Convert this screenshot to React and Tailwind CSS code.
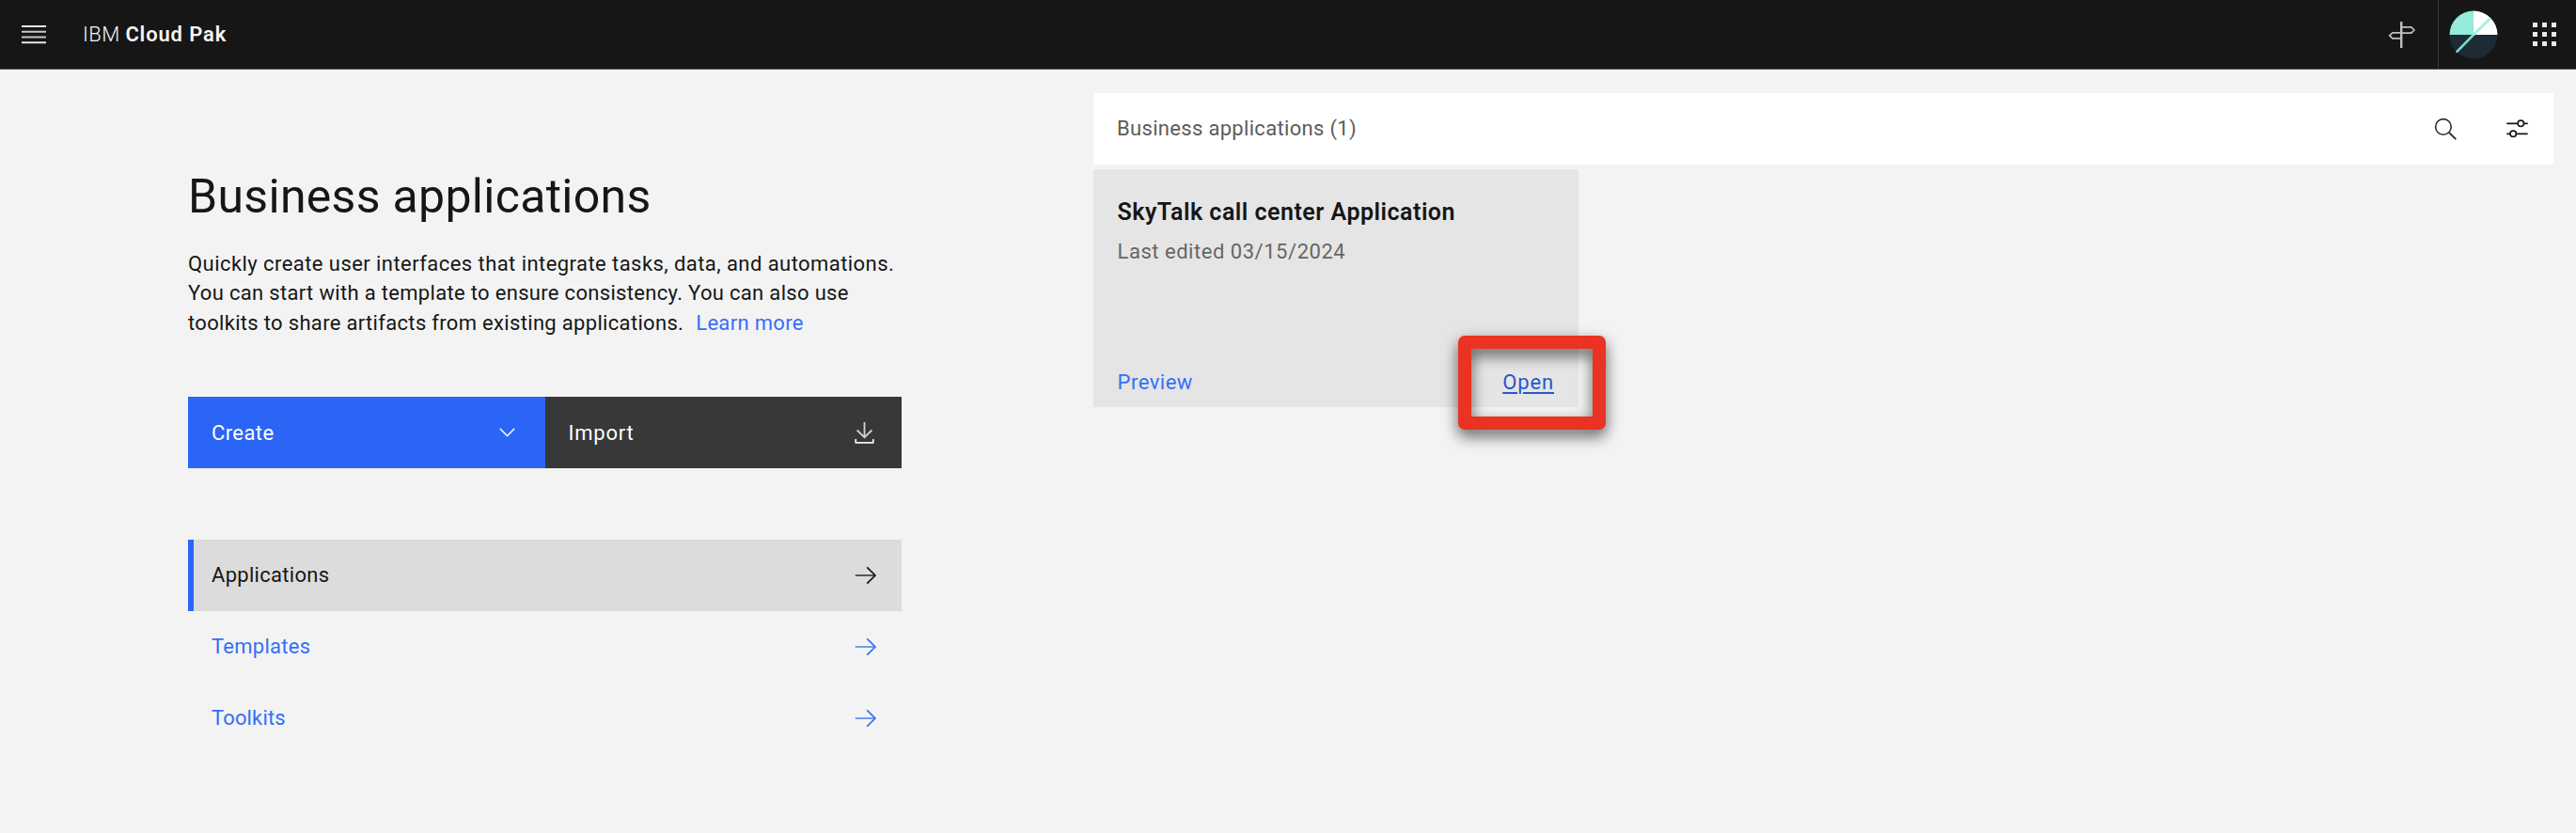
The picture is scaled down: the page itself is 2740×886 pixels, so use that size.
import React from "react";

function MenuIcon() {
  return (
    <svg className="h-[20px] w-[26px]" viewBox="0 0 26 20" fill="none" strokeWidth="2">
      <path d="M0 1h26M0 18.2h26" stroke="#e6e6e6" />
      <path d="M0 6.7h26M0 12.4h26" stroke="#c6c6c6" />
    </svg>
  );
}

function SignpostIcon() {
  return (
    <svg className="h-[30px] w-[30px]" viewBox="0 0 30 30" fill="none" stroke="#c0c0c0" strokeWidth="1.7">
      <path d="M14.2 1v28" strokeWidth="2.4" />
      <path d="M14.2 6.9h10.6L28 10l-3.2 3.1H14.2" strokeLinejoin="round" />
      <path d="M14.2 12.9H4.8L1.7 15.8l3.1 3h9.4" strokeLinejoin="round" />
    </svg>
  );
}

function Avatar() {
  return (
    <svg className="h-[52px] w-[52px]" viewBox="0 0 52 52">
      <path d="M26 .5A25.5 25.5 0 0 0 .5 26H26z" fill="#95ead8" />
      <path d="M26 .5A25.5 25.5 0 0 1 51.5 26H26z" fill="#fff" />
      <path d="M.5 26a25.5 25.5 0 0 0 51 0z" fill="#1c2b36" />
      <path d="M8.4 43.8 26 26" stroke="#7fd8c8" strokeWidth="2.6" strokeLinecap="round" />
      <path d="M26 26 44 8.2" stroke="#a5efe0" strokeWidth="2.8" />
    </svg>
  );
}

function AppsIcon() {
  return (
    <div className="grid grid-cols-3 gap-[5.5px]">
      {[0, 1, 2, 3, 4, 5, 6, 7, 8].map((i) => (
        <span key={i} className="h-[4.5px] w-[4.5px] bg-[#e8e8e8]" />
      ))}
    </div>
  );
}

function SearchIcon() {
  return (
    <svg className="h-[25px] w-[25px]" viewBox="0 0 25 25" fill="none" stroke="#2a2a2a" strokeWidth="1.6">
      <circle cx="9.9" cy="9.9" r="8.3" />
      <path d="m16 16 7.3 7.2" strokeWidth="1.8" />
    </svg>
  );
}

function FilterIcon() {
  return (
    <svg className="h-[22px] w-[23px]" viewBox="0 0 23 22" fill="none" stroke="#161616" strokeWidth="1.6">
      <path d="M.3 5.3H12M18.6 5.3h4.1M.3 16.3h3.600M10.500 16.3h12.200" strokeWidth="1.7" />
      <circle cx="15.3" cy="5.3" r="3.2" />
      <circle cx="7.2" cy="16.3" r="3.2" />
    </svg>
  );
}

function ArrowIcon() {
  return (
    <svg className="h-[30px] w-[30px]" viewBox="0 0 32 32" fill="none" stroke="currentColor" strokeWidth="1.8">
      <path d="M4 16h22.500" strokeOpacity="0.8" />
      <path d="m17.300 6.700 9.300 9.300-9.300 9.300" />
    </svg>
  );
}

const navItems = ["Applications", "Templates", "Toolkits"];
const navTracking = ["tracking-[0.3px]", "tracking-[0.27px]", "tracking-[0.15px]"];

export default function App() {
  return (
    <div className="flex h-[886px] w-[2740px] flex-col overflow-hidden bg-[#f3f3f3] font-['Roboto',sans-serif] text-[22px] text-[#161616]">
      <header className="flex h-[74px] shrink-0 items-center border-b border-[#4a4a4a] bg-[#161616] text-[#f4f4f4]">
        <div className="ml-[22.5px]">
          <MenuIcon />
        </div>
        <div className="ml-[39.500px] whitespace-nowrap leading-[30px]">
          <span className="font-light tracking-[0.5px]">IBM</span>{" "}
          <span className="font-semibold tracking-[0.85px]">Cloud Pak</span>
        </div>
        <div className="ml-auto flex h-full items-center">
          <div className="flex h-full w-[54px] items-center border-r border-[#393939]">
            <SignpostIcon />
          </div>
          <div className="ml-[10.500px]">
            <Avatar />
          </div>
          <div className="mr-[21.500px] ml-[37.500px]">
            <AppsIcon />
          </div>
        </div>
      </header>

      <main className="flex flex-1">
        <section className="ml-[200px] flex w-[759px] flex-col">
          <h1 className="mt-[105px] text-[50px] leading-[60px] tracking-[0.3px] whitespace-nowrap">Business applications</h1>
          <p className="mt-[25.500px] text-[22px] leading-[31.65px] whitespace-nowrap">
            <span className="block tracking-[0.44px]">
              Quickly create user interfaces that integrate tasks, data, and automations.
            </span>
            <span className="block tracking-[0.32px]">
              You can start with a template to ensure consistency. You can also use
            </span>
            <span className="block tracking-[0.32px]">
              toolkits to share artifacts from existing applications.
              <a className="ml-[13px] text-[#3570f5]">Learn more</a>
            </span>
          </p>

          <div className="mt-[62.500px] flex h-[76px] text-white">
            <button className="flex w-1/2 items-center justify-between bg-[#2a65f5] pr-[32px] pl-[25px]">
              <span className="relative top-px tracking-[0.4px]">Create</span>
              <svg className="h-[10px] w-[17px]" viewBox="0 0 17 10" fill="none" stroke="#e8effe" strokeWidth="1.6">
                <path d="m.8 .9 7.7 7.7L16.200 .9" />
              </svg>
            </button>
            <button className="flex w-1/2 items-center justify-between bg-[#383838] pr-[29px] pl-[25px]">
              <span className="relative top-px tracking-[0.75px]">Import</span>
              <svg className="h-[24px] w-[21px]" viewBox="0 0 21 24" fill="none" stroke="#f0f0f0" strokeWidth="1.8">
                <path d="M10.500 1v15.200M2.600 9.500l7.900 7.700 7.900-7.700" stroke="#d0d0d0" />
                <path d="M1.200 19v3.800h18.600V19" strokeLinejoin="round" />
              </svg>
            </button>
          </div>

          <nav className="mt-[76px] flex flex-col">
            {navItems.map((label, i) => (
              <a
                key={label}
                className={
                  i === 0
                    ? "flex h-[76px] items-center justify-between border-l-[6px] border-[#2a65f5] bg-[#dcdcdc] pr-[23px] pl-[19px]"
                    : "flex h-[76px] items-center justify-between pr-[23px] pl-[25px] text-[#3570f5]"
                }
              >
                <span className={navTracking[i]}>{label}</span>
                <ArrowIcon />
              </a>
            ))}
          </nav>
        </section>

        <section className="mt-[25px] ml-[204px] flex w-[1553px] flex-col">
          <div className="flex h-[76px] items-center bg-white pl-[25px]">
            <span className="relative -top-px tracking-[0.32px] text-[#5c5c5c]">Business applications (1)</span>
            <div className="mr-[27px] ml-auto flex items-center">
              <SearchIcon />
              <div className="ml-[52px]">
                <FilterIcon />
              </div>
            </div>
          </div>

          <article className="mt-[5px] flex h-[253px] w-[515.500px] flex-col bg-[#e5e5e5] px-[25.500px]">
            <h2 className="mt-[31px] text-[25px] leading-[30px] font-semibold tracking-[0.5px] whitespace-nowrap">
              SkyTalk call center Application
            </h2>
            <div className="mt-[12px] leading-[30px] tracking-[0.53px] text-[#666]">Last edited 03/15/2024</div>
            <div className="mt-auto mb-[11px] flex items-center justify-between leading-[30px]">
              <a className="tracking-[0.5px] text-[#3570f5]">Preview</a>
              <a className="relative text-[#2a55cc]">
                <span className="tracking-[0.85px] underline decoration-[1.500px] underline-offset-[3px]">Open</span>
                <span className="absolute top-[-35px] left-[-47px] h-[100px] w-[157px] rounded-[7px] border-[14px] border-[#eb3323] [filter:drop-shadow(0_7px_8px_rgba(0,0,0,0.62))]" />
              </a>
            </div>
          </article>
        </section>
      </main>
    </div>
  );
}
